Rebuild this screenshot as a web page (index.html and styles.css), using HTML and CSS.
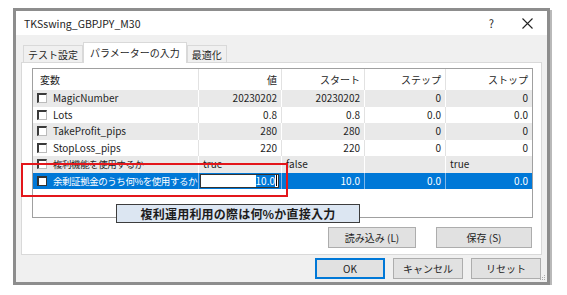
FILE: index.html
```html
<!DOCTYPE html>
<html lang="ja">
<head>
  <meta charset="UTF-8" />
  <title>TKSswing_GBPJPY_M30</title>
  <link rel="stylesheet" href="styles.css">
</head>
<body>

  <div class="window">
    <div class="titlebar">
      <span class="title">TKSswing_GBPJPY_M30</span>
      <span class="help">?</span>
      <svg class="close" width="11" height="11" viewBox="0 0 11 11">
        <path d="M0.5 0.5 L10.5 10.5 M10.5 0.5 L0.5 10.5" stroke="#222" stroke-width="1.1" fill="none"/>
      </svg>
    </div>

    <div class="content">
      <div class="tabs">
        <div class="tab">テスト設定</div>
        <div class="tab active">パラメーターの入力</div>
        <div class="tab">最適化</div>
      </div>

      <div class="panel">
        <div class="list">
          <div class="row head">
            <div class="cell name">変数</div>
            <div class="cell num">値</div>
            <div class="cell num">スタート</div>
            <div class="cell num">ステップ</div>
            <div class="cell num">ストップ</div>
          </div>
          <div class="row odd">
            <div class="cell name"><span class="check"></span>MagicNumber</div>
            <div class="cell num">20230202</div>
            <div class="cell num">20230202</div>
            <div class="cell num">0</div>
            <div class="cell num">0</div>
          </div>
          <div class="row">
            <div class="cell name"><span class="check"></span>Lots</div>
            <div class="cell num">0.8</div>
            <div class="cell num">0.8</div>
            <div class="cell num">0.0</div>
            <div class="cell num">0.0</div>
          </div>
          <div class="row odd">
            <div class="cell name"><span class="check"></span>TakeProfit_pips</div>
            <div class="cell num">280</div>
            <div class="cell num">280</div>
            <div class="cell num">0</div>
            <div class="cell num">0</div>
          </div>
          <div class="row">
            <div class="cell name"><span class="check"></span>StopLoss_pips</div>
            <div class="cell num">220</div>
            <div class="cell num">220</div>
            <div class="cell num">0</div>
            <div class="cell num">0</div>
          </div>
          <div class="row odd">
            <div class="cell name jp"><span class="check"></span>複利機能を使用するか</div>
            <div class="cell">true</div>
            <div class="cell">false</div>
            <div class="cell"></div>
            <div class="cell">true</div>
          </div>
          <div class="row selected">
            <div class="cell name jp"><span class="check"></span>余剰証拠金のうち何%を使用するか</div>
            <div class="cell edit-cell">
              <div class="edit"><span class="sel">10.0</span><span class="caret"></span></div>
            </div>
            <div class="cell num">10.0</div>
            <div class="cell num">0.0</div>
            <div class="cell num">0.0</div>
          </div>

          <div class="red-box"></div>
          <div class="note">複利運用利用の際は何%か直接入力</div>
        </div>

        <div class="panel-buttons">
          <button class="btn load">読み込み (L)</button>
          <button class="btn save">保存 (S)</button>
        </div>
      </div>

      <div class="dialog-buttons">
        <button class="btn default">OK</button>
        <button class="btn">キャンセル</button>
        <button class="btn">リセット</button>
      </div>
    </div>

    <svg class="grip" width="7" height="7" viewBox="0 0 7 7">
      <rect x="5" y="1" width="1" height="1" fill="#aaa"/>
      <rect x="3" y="3" width="1" height="1" fill="#aaa"/>
      <rect x="5" y="3" width="1" height="1" fill="#aaa"/>
      <rect x="1" y="5" width="1" height="1" fill="#aaa"/>
      <rect x="3" y="5" width="1" height="1" fill="#aaa"/>
      <rect x="5" y="5" width="1" height="1" fill="#aaa"/>
    </svg>
  </div>

</body>
</html>
```

FILE: styles.css
```css
:root {
  --ui-font: "Noto Sans CJK JP", "Noto Sans", sans-serif;
  --row-gray: #e9e9e9;
  --line: #e2e2e2;
  --select: #0078d7;
}

body {
  margin: 0;
  padding: 8px 0 0 13px;
  background: #fff;
  font-family: var(--ui-font);
  font-size: 10px;
  color: #1e1e1e;
}

.window {
  position: relative;
  width: 531px;
  height: 271px;
  border: 3px solid #8d8d8d;
  box-shadow: 2px 2px 0 #b9b9b9;
  background: #f0f0f0;
  display: flex;
  flex-direction: column;
}

.titlebar {
  height: 24px;
  background: #fff;
  display: flex;
  align-items: center;
  padding: 0 14px 0 8px;
}

.title {
  font-size: 10.5px;
  flex: 1;
}

.help {
  font-size: 11px;
  margin-right: 28px;
}

.content {
  flex: 1;
  padding: 6px 5px 0 5px;
}

.tabs {
  display: flex;
  align-items: flex-end;
  height: 21px;
  padding-left: 2px;
}

.tab {
  height: 17px;
  line-height: 17px;
  padding: 0 4px;
  border: 1px solid #d9d9d9;
  border-bottom: none;
  background: #f0f0f0;
  box-sizing: border-box;
}

.tab.active {
  height: 21px;
  line-height: 19px;
  background: #fff;
  padding: 0 6px;
  margin-bottom: -1px;
  position: relative;
}

.panel {
  height: 193px;
  box-sizing: border-box;
  background: #fff;
  border: 1px solid #d9d9d9;
  padding: 5px 8px 0 10px;
}

.list {
  position: relative;
  height: 150px;
  box-sizing: border-box;
  border: 1px solid #a0a0a0;
}

.row {
  display: grid;
  grid-template-columns: 166px 83px 83px 81px 86px;
  height: 16.5px;
  line-height: 16px;
}

.row.odd {
  background: var(--row-gray);
}

.row.head {
  height: 21px;
  line-height: 21px;
  background: #fff;
}

.cell {
  border-right: 1px solid var(--line);
  padding: 0 4px;
  white-space: nowrap;
  overflow: hidden;
}

.row.odd .cell {
  border-right-color: #fff;
}

.cell:last-child {
  border-right: none;
}

.cell.num {
  text-align: right;
}

.head .cell.name {
  padding-left: 7px;
}

.cell.name {
  display: flex;
  align-items: center;
  padding-left: 4px;
  gap: 6px;
}

.cell.name.jp {
  font-size: 9.5px;
  letter-spacing: -0.45px;
}

.check {
  flex-shrink: 0;
  width: 10px;
  height: 10px;
  box-sizing: border-box;
  border-top: 2px solid #3a3a3a;
  border-left: 2px solid #3a3a3a;
  border-right: 1px solid #bbb;
  border-bottom: 1px solid #bbb;
  background: #fff;
}

.row.selected {
  background: var(--select);
  color: #fff;
}

.row.selected .cell {
  border-right-color: #7fb6e9;
}

.row.selected .check {
  border: 1px solid #333;
  border-top-width: 2px;
  border-left-width: 2px;
}

.edit-cell {
  padding: 1px 2px 0 1px;
}

.edit {
  height: 14px;
  box-sizing: border-box;
  border: 1px solid #333;
  background: #fff;
  display: flex;
  justify-content: flex-end;
  align-items: center;
  padding-right: 1px;
}

.sel {
  background: var(--select);
  color: #fff;
  line-height: 12px;
}

.caret {
  width: 1px;
  height: 11px;
  background: #000;
  margin-left: 1px;
}

.red-box {
  position: absolute;
  left: -12px;
  top: 94px;
  width: 267px;
  height: 34px;
  box-sizing: border-box;
  border: 2px solid #e3161b;
}

.note {
  position: absolute;
  left: 83px;
  top: 135px;
  width: 244px;
  height: 19px;
  box-sizing: border-box;
  border: 1px solid #3d3d3d;
  background: #dce6f2;
  color: #1c1c1c;
  font-size: 12px;
  font-weight: bold;
  line-height: 17px;
  text-align: center;
  letter-spacing: 0.2px;
}

.panel-buttons {
  display: flex;
  justify-content: flex-end;
  gap: 20px;
  margin-top: 9px;
  padding-right: 1px;
}

.btn {
  height: 21px;
  font-family: var(--ui-font);
  font-size: 10px;
  color: #1e1e1e;
  background: #e1e1e1;
  border: 1px solid #adadad;
  padding: 0;
}

.btn.load {
  width: 88px;
}

.btn.save {
  width: 96px;
}

.dialog-buttons {
  display: flex;
  justify-content: flex-end;
  gap: 8px;
  margin-top: 3px;
  padding-right: 1px;
}

.dialog-buttons .btn {
  width: 70px;
}

.btn.default {
  border: 2px solid var(--select);
}

.grip {
  position: absolute;
  right: 1px;
  bottom: 1px;
}
```
